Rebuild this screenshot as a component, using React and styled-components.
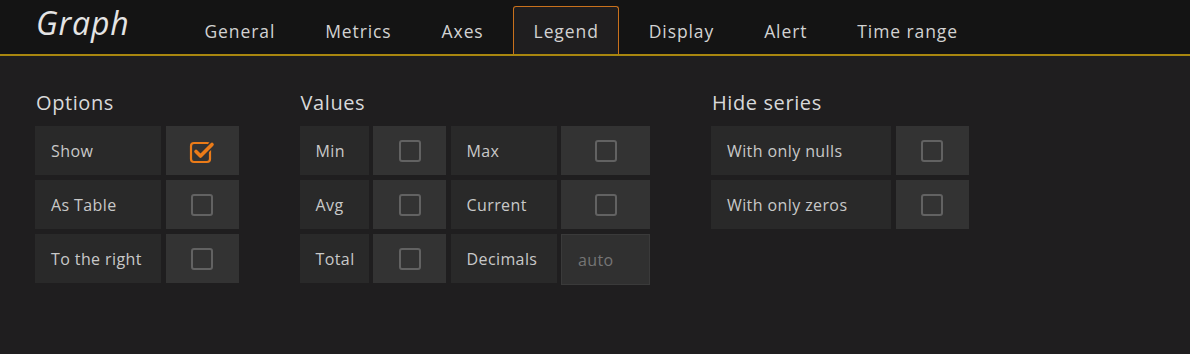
import styled, { createGlobalStyle } from "styled-components";

const Global = createGlobalStyle`
	body {
		margin: 0;
		background: #1f1e1f;
		font-family: "Open Sans", "Liberation Sans", sans-serif;
		color: #d8d9da;
	}
`;

const tabs = ["General", "Metrics", "Axes", "Legend", "Display", "Alert", "Time range"];

function CheckMark({ checked }) {
	if (!checked) return <Box />;
	return (
		<svg width="28" height="26" viewBox="0 0 28 26">
			<rect x="3" y="5" width="19" height="19" rx="3" fill="none" stroke="#eb7b18" strokeWidth="2.2" />
			<path d="M8 13.5 L12.5 18 L24 6.5" fill="none" stroke="#333333" strokeWidth="6.5" strokeLinecap="round" strokeLinejoin="round" />
			<path d="M8 13.5 L12.5 18 L24 6.5" fill="none" stroke="#eb7b18" strokeWidth="3.6" strokeLinecap="round" strokeLinejoin="round" />
		</svg>
	);
}

export default function App() {
	return (
		<>
			<Global />
			<Header>
				<Title>Graph</Title>
				<Tabs>
					{tabs.map((t) => (
						<Tab key={t} $active={t === "Legend"}>
							{t}
						</Tab>
					))}
				</Tabs>
			</Header>
			<Content>
				<Section>
					<Heading>Options</Heading>
					<Grid $cols="126px 73px">
						<Label>Show</Label>
						<CheckCell>
							<CheckMark checked />
						</CheckCell>
						<Label>As Table</Label>
						<CheckCell>
							<CheckMark />
						</CheckCell>
						<Label>To the right</Label>
						<CheckCell>
							<CheckMark />
						</CheckCell>
					</Grid>
				</Section>
				<Section>
					<Heading>Values</Heading>
					<Grid $cols="69px 73px 106px 89px">
						<Label>Min</Label>
						<CheckCell>
							<CheckMark />
						</CheckCell>
						<Label>Max</Label>
						<CheckCell>
							<CheckMark />
						</CheckCell>
						<Label>Avg</Label>
						<CheckCell>
							<CheckMark />
						</CheckCell>
						<Label>Current</Label>
						<CheckCell>
							<CheckMark />
						</CheckCell>
						<Label>Total</Label>
						<CheckCell>
							<CheckMark />
						</CheckCell>
						<Label>Decimals</Label>
						<Input placeholder="auto" />
					</Grid>
				</Section>
				<Section>
					<Heading>Hide series</Heading>
					<Grid $cols="180px 73px">
						<Label>With only nulls</Label>
						<CheckCell>
							<CheckMark />
						</CheckCell>
						<Label>With only zeros</Label>
						<CheckCell>
							<CheckMark />
						</CheckCell>
					</Grid>
				</Section>
			</Content>
		</>
	);
}

const Header = styled.div`
	display: flex;
	align-items: flex-end;
	height: 54px;
	padding-left: 36px;
	background: #141414;
	border-bottom: 2px solid #a8860f;
`;

const Title = styled.div`
	align-self: center;
	width: 148px;
	margin-top: -9px;
	font-size: 32px;
	font-style: italic;
	color: #e4e4e4;
	letter-spacing: 0.8px;
`;

const Tabs = styled.div`
	display: flex;
	gap: 9px;
`;

const Tab = styled.div`
	display: flex;
	align-items: center;
	height: 48px;
	padding: 0 19.5px;
	box-sizing: border-box;
	font-size: 17.5px;
	letter-spacing: 0.9px;
	color: #d2d2d2;
	border: 1.5px solid ${(p) => (p.$active ? "#c9711c" : "transparent")};
	border-bottom: none;
	border-radius: 3px 3px 0 0;
	background: ${(p) => (p.$active ? "#1f1e1f" : "transparent")};
`;

const Content = styled.div`
	display: flex;
	gap: 61px;
	padding: 35px 35px;
`;

const Section = styled.div`
	display: flex;
	flex-direction: column;
`;

const Heading = styled.div`
	font-size: 20px;
	line-height: 24px;
	letter-spacing: 0.6px;
	margin-bottom: 11px;
	color: #d8d9da;
	padding-left: 1px;
`;

const Grid = styled.div`
	display: grid;
	grid-template-columns: ${(p) => p.$cols};
	grid-auto-rows: 49px;
	gap: 5px 4.5px;
`;

const Label = styled.div`
	display: flex;
	align-items: center;
	padding-left: 16px;
	background: #292929;
	font-size: 16px;
	letter-spacing: 0.4px;
	color: #c8c8c8;
	white-space: nowrap;
`;

const CheckCell = styled.div`
	display: flex;
	align-items: center;
	justify-content: center;
	background: #333333;
`;

const Box = styled.div`
	width: 18px;
	height: 18px;
	border: 2px solid #626262;
	border-radius: 3px;
`;

const Input = styled.input`
	box-sizing: border-box;
	width: 100%;
	height: 51px;
	margin: 0;
	padding: 0 0 0 16px;
	background: #303030;
	border: 1px solid #3a3a3a;
	font-family: inherit;
	font-size: 16px;
	letter-spacing: 0.4px;
	color: #c8c8c8;
	outline: none;
	&::placeholder {
		color: #757575;
	}
`;
